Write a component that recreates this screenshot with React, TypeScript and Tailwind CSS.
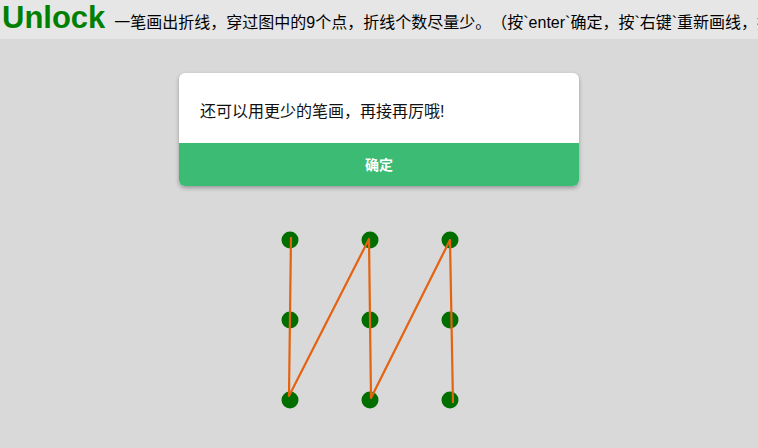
const dots = [
  [290, 54], [370, 54], [450, 54],
  [290, 134], [370, 134], [450, 134],
  [290, 214], [370, 214], [450, 214],
];

// the stroke path the player drew
const path = "291,51 289,210 369,53 371,212 450,54 453,217";

function Header() {
  return (
    <div className="h-[39px] bg-[#e6e6e6] flex items-baseline whitespace-nowrap overflow-hidden pl-[2px]">
      <h1 className="text-[31px] leading-[35px] font-bold text-[#008000] font-['Liberation_Sans',sans-serif]">
        Unlock
      </h1>
      <span className="ml-[9px] text-[16px] text-black [text-spacing-trim:space-all] font-['Liberation_Sans','Noto_Sans_CJK_SC',sans-serif]">
        一笔画出折线，穿过图中的9个点，折线个数尽量少。（按`enter`确定，按`右键`重新画线，按`左键`撤销）
      </span>
    </div>
  );
}

function Dialog() {
  return (
    <div className="w-[400px] mx-auto mt-[34px] bg-white rounded-[6px] overflow-hidden shadow-[0_2px_4px_rgba(0,0,0,0.3)] font-['Liberation_Sans','Noto_Sans_CJK_SC',sans-serif]">
      <p className="h-[70px] px-[21px] pt-[27px] text-[16px] leading-[24px] text-[#111]">
        还可以用更少的笔画，再接再厉哦!
      </p>
      <button className="w-full h-[43px] pt-[2px] bg-[#3cbb74] text-white text-[14px] font-bold">
        确定
      </button>
    </div>
  );
}

export default function App() {
  return (
    <div className="min-h-screen bg-[#d9d9d9]">
      <Header />
      <Dialog />
      <svg width="758" height="262" className="block">
        {dots.map(([x, y], i) => (
          <circle key={i} cx={x} cy={y} r="8.5" fill="#006f00" />
        ))}
        <polyline points={path} fill="none" stroke="#e5620e" strokeWidth="2.2" strokeLinejoin="round" />
      </svg>
    </div>
  );
}
